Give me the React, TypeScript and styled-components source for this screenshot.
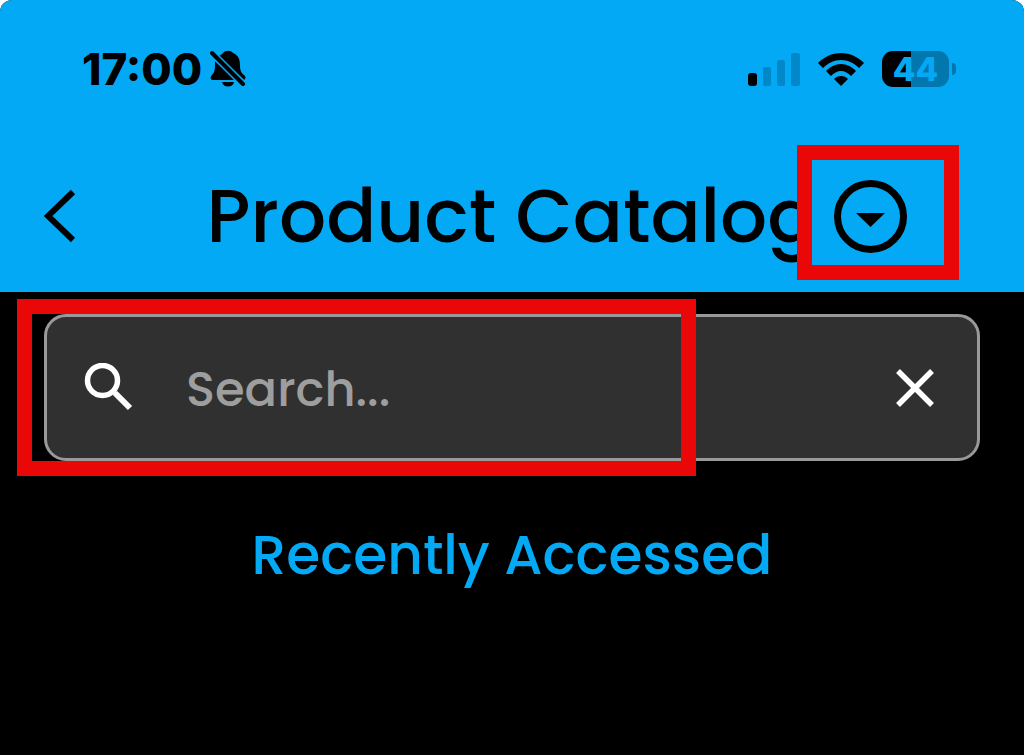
import React from "react";
import styled, { createGlobalStyle } from "styled-components";

const BLUE = "#03a9f5";
const TEXT_FONT = `Poppins, Inter, "Liberation Sans", sans-serif`;

const GlobalStyle = createGlobalStyle`
  *, *::before, *::after { box-sizing: border-box; }
  body { margin: 0; background: #fff; font-family: ${TEXT_FONT}; }
  button { display: block; border: 0; padding: 0; background: none; color: inherit; cursor: pointer; }
  svg { display: block; }
`;

const Screen = styled.div`
  min-height: 100vh;
  border-radius: 12px 12px 0 0;
  overflow: hidden;
  background: #000;
`;

const Header = styled.header`
  background: ${BLUE};
  color: #000;
`;

const StatusBar = styled.div`
  display: flex;
  justify-content: space-between;
  align-items: center;
  height: 138px;
  padding: 0 68px 0 82px;
`;

const StatusGroup = styled.div<{ $gap: number }>`
  display: flex;
  align-items: center;
  gap: ${(p) => p.$gap}px;
`;

const Clock = styled.time`
  font: 800 44px/48px Inter, sans-serif;
`;

const Battery = styled.div`
  display: flex;
  align-items: center;
  gap: 3px;
`;

const BatteryBody = styled.div`
  width: 67px;
  height: 36px;
  border-radius: 11px;
  background: linear-gradient(to right, #000 44%, #0277ad 44%);
  color: ${BLUE};
  font: 800 33px/36px Inter, sans-serif;
  text-align: center;
`;

const BatteryTip = styled.div`
  width: 4px;
  height: 12px;
  border-radius: 0 4px 4px 0;
  background: #0277ad;
`;

const TitleBar = styled.div`
  display: grid;
  grid-template-columns: 1fr auto 1fr;
  align-items: center;
  column-gap: 16px;
  padding-top: 2px;
  height: 154px;
`;

const BackButton = styled.button`
  justify-self: start;
  margin-left: 44px;
`;

const Title = styled.h1`
  margin: 0;
  font-size: 74px;
  font-weight: 500;
  line-height: 100px;
  white-space: nowrap;
`;

const MenuAnchor = styled.div`
  position: relative;
  justify-self: start;
`;

const Highlight = styled.div<{ $inset: string }>`
  position: absolute;
  inset: ${(p) => p.$inset};
  border: 15px solid #ea0707;
  pointer-events: none;
`;

const Content = styled.main`
  padding: 22px 44px;
`;

const SearchArea = styled.div`
  position: relative;
`;

const SearchBox = styled.label`
  display: flex;
  align-items: center;
  height: 147px;
  padding: 0 43px 0 37px;
  border: 3px solid #999;
  border-radius: 22px;
  background: #303030;
  color: #fff;
`;

const SearchInput = styled.input`
  flex: 1;
  min-width: 0;
  margin-left: 53px;
  padding: 4px 0 0;
  border: 0;
  outline: 0;
  background: none;
  color: #fff;
  font: 500 48px/60px ${TEXT_FONT};
  &::placeholder { color: #9e9e9e; opacity: 1; }
`;

const SectionTitle = styled.h2`
  margin: 58px 0 0;
  color: ${BLUE};
  font-size: 55px;
  font-weight: 500;
  line-height: 72px;
  text-align: center;
`;

const BellOffIcon = () => (
  <svg width="36" height="38" viewBox="0 0 36 38" aria-label="Silent mode">
    <path d="M5 11 L25 30 H3 C0 30 0 27 2 25 C5 22 5 19 5 11 Z" />
    <path d="M9 6 C11 5 12 4 13 3 C15 0 21 0 23 3 C28 5 30 9 30 15 C30 20 31 23 34 25 C36 27 36 28 34 30 Z" />
    <path d="M12 32 H24 C23 38 13 38 12 32 Z" />
    <path d="M2 3 L34 35" stroke={BLUE} strokeWidth="7" />
    <path d="M2 3 L33 34" stroke="#000" strokeWidth="4" strokeLinecap="round" />
  </svg>
);

const SignalIcon = () => (
  <svg width="52" height="33" viewBox="0 0 52 33" aria-label="Signal">
    <rect x="0" y="20" width="9" height="13" rx="3" />
    <g fill="#0288c8">
      <rect x="15" y="14" width="8" height="19" rx="2" />
      <rect x="29" y="7" width="8" height="26" rx="2" />
      <rect x="43" y="0" width="9" height="33" rx="2" />
    </g>
  </svg>
);

const WifiIcon = () => (
  <svg width="46" height="33" viewBox="0 0 46 33" aria-label="Wi-Fi">
    <path d="M23 0 C14 0 6 4 0 10 L5 15 C10 10 16 7 23 7 C30 7 36 10 41 15 L46 10 C40 4 32 0 23 0 Z" />
    <path d="M23 11 C17 11 12 14 8 18 L13 23 C16 20 19 18 23 18 C27 18 30 20 33 23 L38 18 C34 14 29 11 23 11 Z" />
    <path d="M23 23 C20 23 18 24 16 26 L23 33 L30 26 C28 24 26 23 23 23 Z" />
  </svg>
);

export default function App() {
  return (
    <Screen>
      <GlobalStyle />
      <Header>
        <StatusBar>
          <StatusGroup $gap={8}>
            <Clock>17:00</Clock>
            <BellOffIcon />
          </StatusGroup>
          <StatusGroup $gap={18}>
            <SignalIcon />
            <WifiIcon />
            <Battery>
              <BatteryBody>44</BatteryBody>
              <BatteryTip />
            </Battery>
          </StatusGroup>
        </StatusBar>
        <TitleBar>
          <BackButton aria-label="Back">
            <svg width="32" height="54" viewBox="0 0 32 54">
              <path d="M29 3 L4 27 L29 51" fill="none" stroke="#000" strokeWidth="6" />
            </svg>
          </BackButton>
          <Title>Product Catalog</Title>
          <MenuAnchor>
            <button aria-label="Open catalog menu">
              <svg width="73" height="73" viewBox="0 0 73 73">
                <circle cx="36.5" cy="36.5" r="33" fill="none" stroke="#000" strokeWidth="7" />
                <path d="M22 33 H51 L36.5 47 Z" />
              </svg>
            </button>
            <Highlight $inset="-35px -52px -27px -37px" />
          </MenuAnchor>
        </TitleBar>
      </Header>
      <Content>
        <SearchArea>
          <SearchBox>
            <svg width="49" height="49" viewBox="0 0 49 49" fill="none" stroke="#fff" aria-hidden="true">
              <circle cx="18.5" cy="17.5" r="15" strokeWidth="5.5" />
              <path d="M31 30 L46 45" strokeWidth="6" />
              <path d="M28 27 L32 31" strokeWidth="4" />
            </svg>
            <SearchInput type="text" placeholder="Search..." aria-label="Search" />
            <button aria-label="Clear search">
              <svg width="38" height="38" viewBox="0 0 38 38">
                <path d="M2 2 L36 36 M36 2 L2 36" stroke="#fff" strokeWidth="5.5" />
              </svg>
            </button>
          </SearchBox>
          <Highlight $inset="-15px 284px -15px -27px" />
        </SearchArea>
        <SectionTitle>Recently Accessed</SectionTitle>
      </Content>
    </Screen>
  );
}
